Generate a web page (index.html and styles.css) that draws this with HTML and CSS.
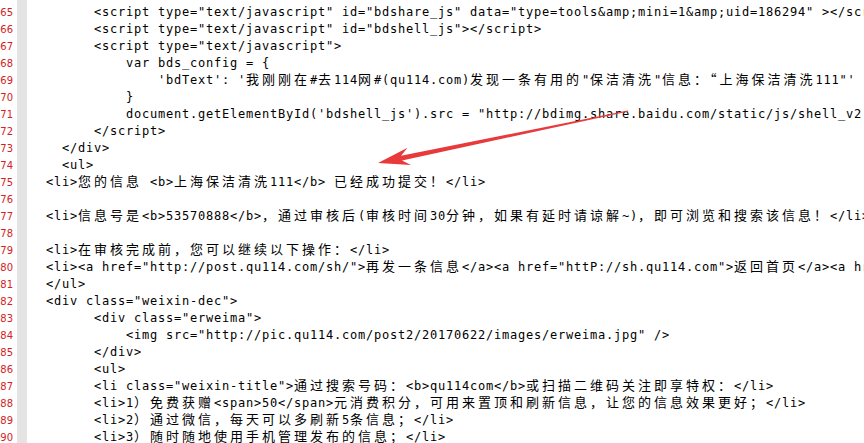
FILE: index.html
```html
<!DOCTYPE html>
<html lang="zh">
<head>
    <meta charset="UTF-8">
    <title>source view</title>
    <link rel="stylesheet" href="styles.css">
</head>
<body>
    <div class="editor">
        <div class="line"><span class="num">64</span><span class="bar"></span><span class="src"></span></div>
        <div class="line"><span class="num">65</span><span class="bar"></span><span class="src">        &lt;script type="text/javascript" id="bdshare_js" data="type=tools&amp;amp;mini=1&amp;amp;uid=186294" &gt;&lt;/script&gt;</span></div>
        <div class="line"><span class="num">66</span><span class="bar"></span><span class="src">        &lt;script type="text/javascript" id="bdshell_js"&gt;&lt;/script&gt;</span></div>
        <div class="line"><span class="num">67</span><span class="bar"></span><span class="src">        &lt;script type="text/javascript"&gt;</span></div>
        <div class="line"><span class="num">68</span><span class="bar"></span><span class="src">            var bds_config = {</span></div>
        <div class="line"><span class="num">69</span><span class="bar"></span><span class="src">                'bdText': '<span class="cn">我刚刚在</span>#<span class="cn">去</span>114<span class="cn">网</span>#(qu114.com)<span class="cn">发现一条有用的</span>"<span class="cn">保洁清洗</span>"<span class="cn">信息：“上海保洁清洗</span>111"'</span></div>
        <div class="line"><span class="num">70</span><span class="bar"></span><span class="src">            }</span></div>
        <div class="line"><span class="num">71</span><span class="bar"></span><span class="src">            document.getElementById('bdshell_js').src = "http://bdimg.share.baidu.com/static/js/shell_v2.js?cdnversion=" + Math.ceil(new Date()/3600000);</span></div>
        <div class="line"><span class="num">72</span><span class="bar"></span><span class="src">        &lt;/script&gt;</span></div>
        <div class="line"><span class="num">73</span><span class="bar"></span><span class="src">    &lt;/div&gt;</span></div>
        <div class="line"><span class="num">74</span><span class="bar"></span><span class="src">    &lt;ul&gt;</span></div>
        <div class="line"><span class="num">75</span><span class="bar"></span><span class="src">  &lt;li&gt;<span class="cn">您的信息</span> &lt;b&gt;<span class="cn">上海保洁清洗</span>111&lt;/b&gt; <span class="cn">已经成功提交！</span>&lt;/li&gt;</span></div>
        <div class="line"><span class="num">76</span><span class="bar"></span><span class="src"></span></div>
        <div class="line"><span class="num">77</span><span class="bar"></span><span class="src">  &lt;li&gt;<span class="cn">信息号是</span>&lt;b&gt;53570888&lt;/b&gt;<span class="cn">，通过审核后</span>(<span class="cn">审核时间</span>30<span class="cn">分钟，如果有延时请谅解</span>~)<span class="cn">，即可浏览和搜索该信息！</span>&lt;/li&gt;</span></div>
        <div class="line"><span class="num">78</span><span class="bar"></span><span class="src"></span></div>
        <div class="line"><span class="num">79</span><span class="bar"></span><span class="src">  &lt;li&gt;<span class="cn">在审核完成前，您可以继续以下操作：</span>&lt;/li&gt;</span></div>
        <div class="line"><span class="num">80</span><span class="bar"></span><span class="src">  &lt;li&gt;&lt;a href="http://post.qu114.com/sh/"&gt;<span class="cn">再发一条信息</span>&lt;/a&gt;&lt;a href="httP://sh.qu114.com"&gt;<span class="cn">返回首页</span>&lt;/a&gt;&lt;a href="http://sh.qu114.com/"&gt;</span></div>
        <div class="line"><span class="num">81</span><span class="bar"></span><span class="src">  &lt;/ul&gt;</span></div>
        <div class="line"><span class="num">82</span><span class="bar"></span><span class="src">  &lt;div class="weixin-dec"&gt;</span></div>
        <div class="line"><span class="num">83</span><span class="bar"></span><span class="src">        &lt;div class="erweima"&gt;</span></div>
        <div class="line"><span class="num">84</span><span class="bar"></span><span class="src">            &lt;img src="http://pic.qu114.com/post2/20170622/images/erweima.jpg" /&gt;</span></div>
        <div class="line"><span class="num">85</span><span class="bar"></span><span class="src">        &lt;/div&gt;</span></div>
        <div class="line"><span class="num">86</span><span class="bar"></span><span class="src">        &lt;ul&gt;</span></div>
        <div class="line"><span class="num">87</span><span class="bar"></span><span class="src">        &lt;li class="weixin-title"&gt;<span class="cn">通过搜索号码：</span>&lt;b&gt;qu114com&lt;/b&gt;<span class="cn">或扫描二维码关注即享特权：</span>&lt;/li&gt;</span></div>
        <div class="line"><span class="num">88</span><span class="bar"></span><span class="src">        &lt;li&gt;1<span class="cn">）免费获赠</span>&lt;span&gt;50&lt;/span&gt;<span class="cn">元消费积分，可用来置顶和刷新信息，让您的信息效果更好；</span>&lt;/li&gt;</span></div>
        <div class="line"><span class="num">89</span><span class="bar"></span><span class="src">        &lt;li&gt;2<span class="cn">）通过微信，每天可以多刷新</span>5<span class="cn">条信息；</span>&lt;/li&gt;</span></div>
        <div class="line"><span class="num">90</span><span class="bar"></span><span class="src">        &lt;li&gt;3<span class="cn">）随时随地使用手机管理发布的信息；</span>&lt;/li&gt;</span></div>
        <div class="line"><span class="num">91</span><span class="bar"></span><span class="src">        &lt;/ul&gt;</span></div>

        <!-- red marker arrow drawn over the code -->
        <svg class="arrow" viewBox="0 0 864 443" width="864" height="443">
            <polygon points="378,163 411,165 402,160.5 628.2,111.5 627.8,110.5 401,155.7 407.5,147.7" fill="#e8393b"/>
        </svg>
    </div>
</body>
</html>
```

FILE: styles.css
```css
html, body {
    margin: 0;
    background: #fff;
    overflow: hidden;
}
.editor {
    position: relative;
    margin-top: -13px;
    color: #000;
}
.line {
    display: grid;
    grid-template-columns: 17px 10px 1fr;
    height: 17px;
    line-height: 17px;
}
.num {
    font-family: "DejaVu Sans", sans-serif;
    font-size: 10px;
    color: #d3221f;
    text-align: right;
    padding-right: 4px;
}
.bar {
    background: #e4e4e4;
}
.src {
    padding-left: 3px;
    font-family: "DejaVu Sans Mono", monospace;
    font-size: 12px;
    letter-spacing: 0.775px;
    white-space: pre;
    overflow: hidden;
}
.cn {
    font-family: "Noto Sans CJK SC", sans-serif;
    font-size: 13px;
    letter-spacing: 3px;
    line-height: 1;
}
.arrow {
    position: absolute;
    left: 0;
    top: 13px;
    pointer-events: none;
}
```
